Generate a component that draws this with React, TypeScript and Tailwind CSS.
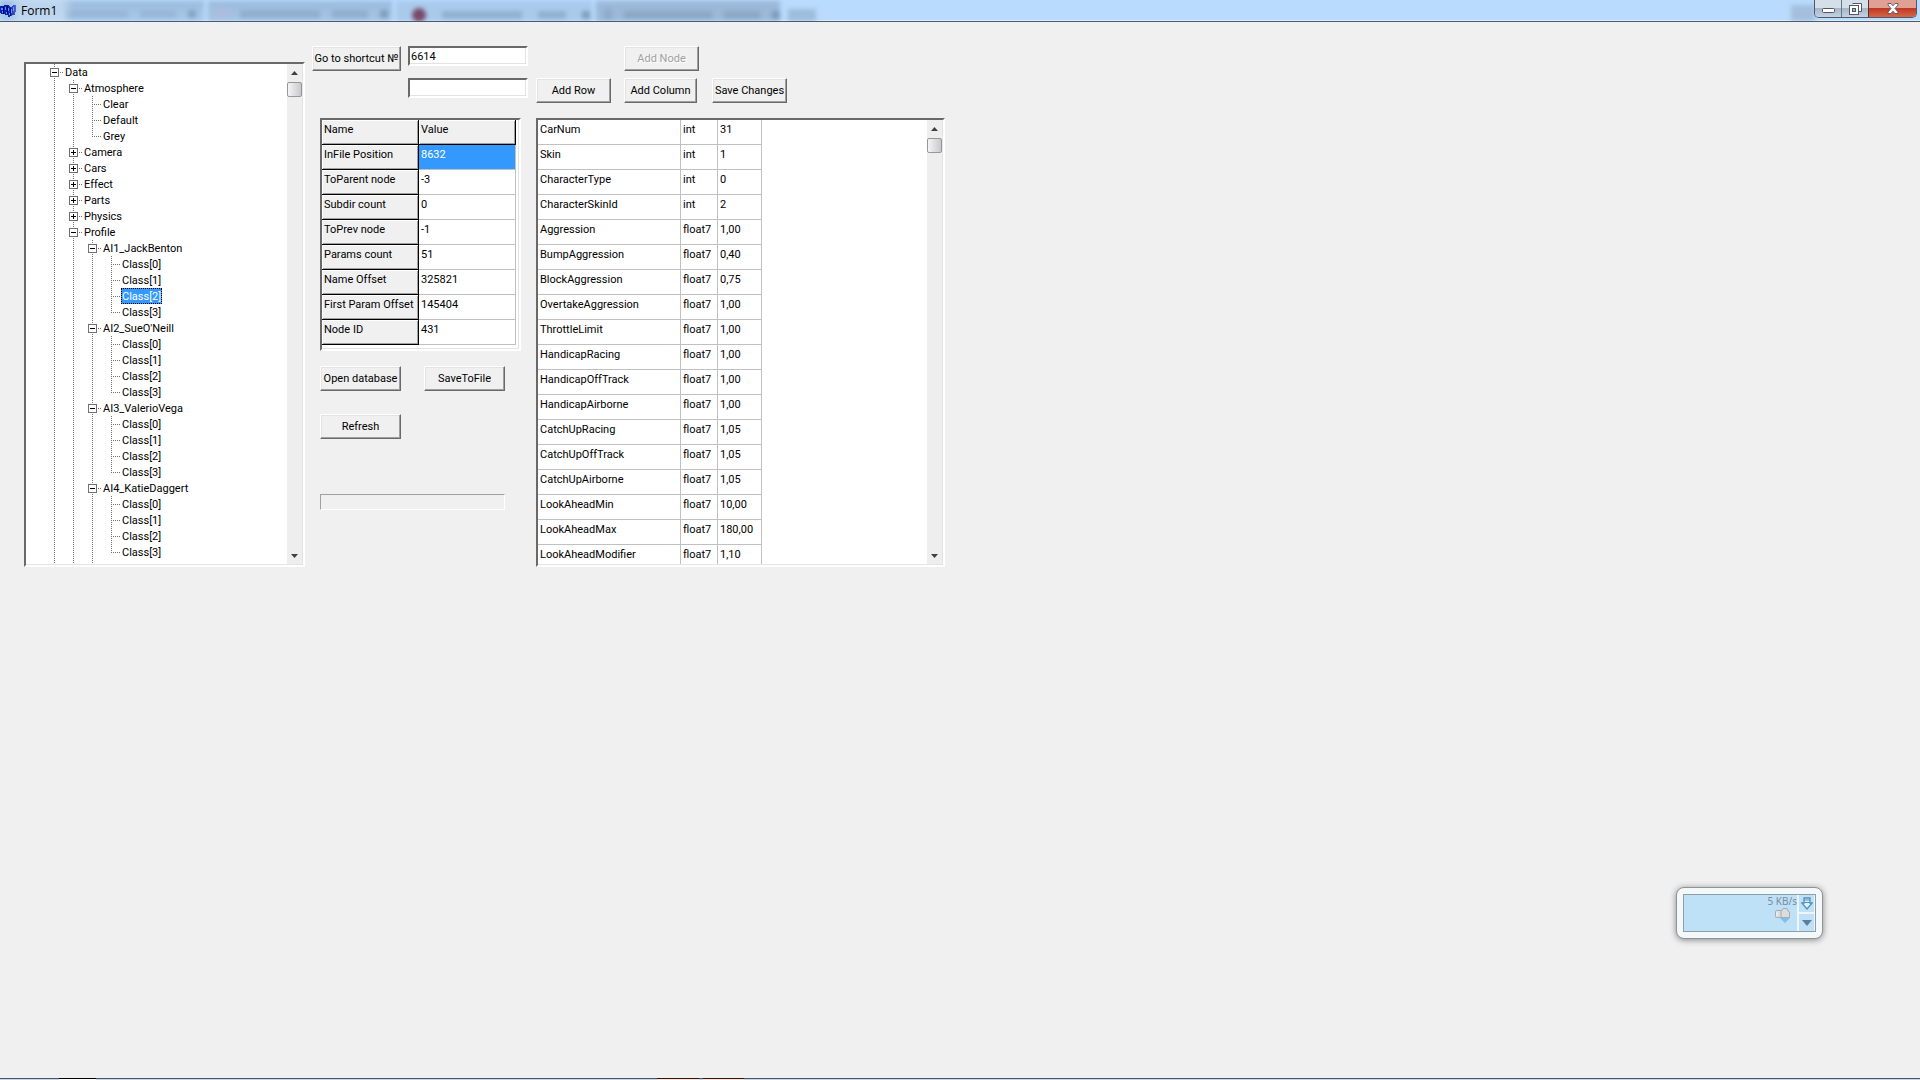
import type { ReactNode } from "react";

type Guide = "line" | "tee" | "end" | "none" | "plus" | "minus";

type Node = { label: string; children?: Node[]; closed?: boolean; selected?: boolean };

const classes = (selected = -1): Node[] =>
  [0, 1, 2, 3].map((n) => ({ label: `Class[${n}]`, selected: n === selected }));

const tree: Node[] = [
  {
    label: "Data",
    children: [
      { label: "Atmosphere", children: [{ label: "Clear" }, { label: "Default" }, { label: "Grey" }] },
      { label: "Camera", closed: true },
      { label: "Cars", closed: true },
      { label: "Effect", closed: true },
      { label: "Parts", closed: true },
      { label: "Physics", closed: true },
      {
        label: "Profile",
        children: [
          { label: "AI1_JackBenton", children: classes(2) },
          { label: "AI2_SueO'Neill", children: classes() },
          { label: "AI3_ValerioVega", children: classes() },
          { label: "AI4_KatieDaggert", children: classes() },
          { label: "AI5_BuddyMcCain", children: [] },
        ],
      },
    ],
  },
];

const nodeInfo: [string, string][] = [
  ["InFile Position", "8632"],
  ["ToParent node", "-3"],
  ["Subdir count", "0"],
  ["ToPrev node", "-1"],
  ["Params count", "51"],
  ["Name Offset", "325821"],
  ["First Param Offset", "145404"],
  ["Node ID", "431"],
];

const params: [string, string, string][] = [
  ["CarNum", "int", "31"],
  ["Skin", "int", "1"],
  ["CharacterType", "int", "0"],
  ["CharacterSkinId", "int", "2"],
  ["Aggression", "float7", "1,00"],
  ["BumpAggression", "float7", "0,40"],
  ["BlockAggression", "float7", "0,75"],
  ["OvertakeAggression", "float7", "1,00"],
  ["ThrottleLimit", "float7", "1,00"],
  ["HandicapRacing", "float7", "1,00"],
  ["HandicapOffTrack", "float7", "1,00"],
  ["HandicapAirborne", "float7", "1,00"],
  ["CatchUpRacing", "float7", "1,05"],
  ["CatchUpOffTrack", "float7", "1,05"],
  ["CatchUpAirborne", "float7", "1,05"],
  ["LookAheadMin", "float7", "10,00"],
  ["LookAheadMax", "float7", "180,00"],
  ["LookAheadModifier", "float7", "1,10"],
];

const sunken =
  "border-2 border-t-[#696969] border-l-[#696969] border-r-white border-b-white shadow-[inset_-1px_-1px_0_#e3e3e3]";

function GuideCell({ kind }: { kind: Guide }) {
  const box = kind === "plus" || kind === "minus";
  return (
    <svg width="19" height="16" viewBox="0 0 19 16" className="shrink-0" shapeRendering="crispEdges" aria-hidden="true">
      <g stroke="#707070" strokeDasharray="1 1" fill="none">
        {kind !== "none" && <path d={kind === "end" ? "M9.5 0V9" : "M9.5 0V16"} />}
        {kind !== "none" && kind !== "line" && <path d="M9 8.5H18" />}
      </g>
      {box && (
        <>
          <rect x="5.5" y="4.5" width="8" height="8" fill="#fff" stroke="#707070" />
          <path d={kind === "plus" ? "M7 8.5H12M9.5 6V11" : "M7 8.5H12"} stroke="#000" />
        </>
      )}
    </svg>
  );
}

function TreeNodes({ nodes, prefix = [] }: { nodes: Node[]; prefix?: Guide[] }) {
  return (
    <ul role="group">
      {nodes.map((node, i) => {
        const last = i === nodes.length - 1 && prefix.length > 1;
        const expandable = node.children || node.closed;
        const kind: Guide = node.closed ? "plus" : node.children ? "minus" : last ? "end" : "tee";
        return (
          <li key={node.label} role="treeitem" aria-expanded={expandable ? !node.closed : undefined}>
            <div className="flex h-4 items-center">
              {prefix.map((g, n) => (
                <GuideCell key={n} kind={g} />
              ))}
              <GuideCell kind={kind} />
              <span
                className={
                  node.selected
                    ? "h-4 bg-[#3399ff] px-px leading-[18px] text-white outline-1 -outline-offset-1 outline-dotted outline-black"
                    : "h-4 px-px leading-[18px]"
                }
              >
                {node.label}
              </span>
            </div>
            {node.children && <TreeNodes nodes={node.children} prefix={[...prefix, "line"]} />}
          </li>
        );
      })}
    </ul>
  );
}

function ScrollBar({ label }: { label: string }) {
  return (
    <div className="mr-px mb-px flex w-[15px] shrink-0 flex-col items-center bg-[#eeeeee]">
      <button type="button" aria-label={`Scroll ${label} up`} className="flex h-4 w-full items-center justify-center pt-0.5">
        <svg width="7" height="4" viewBox="0 0 7 4" aria-hidden="true">
          <path d="M0 4 3.500 0 7 4Z" fill="#404040" />
        </svg>
      </button>
      <div className="mt-0.5 h-[15px] w-[15px] rounded-xs border border-[#979797] bg-linear-to-r from-[#f5f5f5] to-[#c9c9cc]" />
      <button
        type="button"
        aria-label={`Scroll ${label} down`}
        className="mt-auto flex h-4 w-full items-center justify-center"
      >
        <svg width="7" height="4" viewBox="0 0 7 4" aria-hidden="true">
          <path d="M0 0H7L3.500 4Z" fill="#404040" />
        </svg>
      </button>
    </div>
  );
}

function PushButton({ children, className = "", disabled = false }: { children: ReactNode; className?: string; disabled?: boolean }) {
  return (
    <button
      type="button"
      disabled={disabled}
      className={`h-[25px] border border-t-white border-l-white border-r-[#696969] border-b-[#696969] bg-[#f0f0f0] text-center leading-4 whitespace-nowrap shadow-[inset_-1px_-1px_0_#a0a0a0,inset_1px_1px_0_#e3e3e3] disabled:text-[#a0a0a0] disabled:[text-shadow:1px_1px_0_#fff] ${className}`}
    >
      {children}
    </button>
  );
}

const fixedCell =
  "h-[25px] border-r border-b border-black bg-[#f0f0f0] px-0.5 pt-0.5 text-left align-top font-normal leading-4 shadow-[inset_1px_1px_0_#fff,inset_-1px_-1px_0_#a0a0a0]";
const dataCell = "h-[25px] border-r border-b border-[#c0c0c0] px-0.5 pt-0.5 align-top leading-4";

function TitleBar() {
  return (
    <header className="relative flex h-[22px] items-start justify-between overflow-hidden border-b border-[#4a5a72] bg-[#b9dbfd] shadow-[inset_0_-1px_0_#dcecfb]">
      <div className="absolute inset-0 flex items-end gap-1 blur-[2px]" aria-hidden="true">
        <div className="flex h-5 w-[204px] items-center gap-3 bg-linear-to-b from-[#9dbcdd] to-[#a9c9e9] pt-1.5 pl-16">
          <span className="h-2 w-16 bg-[#98b7d8]" />
          <span className="h-2 w-9 bg-[#98b7d8]" />
          <span className="h-2 w-2 bg-[#86a4c4]" />
        </div>
        <div className="flex h-5 w-[184px] items-center gap-3 bg-linear-to-b from-[#9dbcdd] to-[#a5c4e4] pt-1.5 pl-2">
          <span className="h-2 w-3 bg-[#b0bcdc]" />
          <span className="h-2 w-20 bg-[#90aece]" />
          <span className="h-2 w-9 bg-[#90aece]" />
          <span className="h-2 w-2 bg-[#7f9dbc]" />
        </div>
        <div className="flex h-5 w-[196px] items-center gap-4 bg-[#a9caeb] pt-2 pl-4">
          <span className="h-3.5 w-3.5 rounded-full bg-[#7a4a68]" />
          <span className="h-2 w-20 bg-[#92b1d1]" />
          <span className="h-2 w-7 bg-[#92b1d1]" />
          <span className="h-2 w-2 bg-[#809fbe]" />
        </div>
        <div className="flex h-5 w-[184px] items-center gap-3 bg-[#9bb8d8] pt-2 pl-2">
          <span className="h-3 w-2 bg-[#8eabc9]" />
          <span className="h-2 w-22 bg-[#8ba8c6]" />
          <span className="h-2 w-9 bg-[#8ba8c6]" />
          <span className="h-2 w-2 bg-[#7d9bba]" />
        </div>
        <div className="ml-1 h-3 w-7 bg-[#9fbddc]" />
        <div className="mr-[105px] ml-auto h-4 w-6 bg-[#a3bfdc]" />
      </div>
      <div className="relative flex h-5 items-center gap-1 pt-0.5">
        <svg width="17" height="14" viewBox="0 0 17 14" shapeRendering="crispEdges" aria-hidden="true">
          <path d="M0 2h4V1h5v1h1v1h2V2h1V1h3v7h-1v3h-3v1h-2v1H8v-2H5v-1H1V9H0Z" fill="#0b1fb4" />
          <path d="M1 4h2v2H1zM5 3h1v3H5zM8 4h1v3H8zM11 5h1v4h-1zM13 3h1v4h-1zM2 7h1v2H2zM6 8h1v2H6zM9 9h1v2H9z" fill="#4f8fff" />
          <path d="M3 3h1v7H3zM7 2h1v8H7zM10 4h1v8h-1z" fill="#02064e" />
        </svg>
        <h1 className="bg-[#cfe2f5]/60 pr-1 font-['Open_Sans','Noto_Sans',sans-serif] text-xs leading-4 shadow-[0_0_8px_6px_rgba(214,230,246,0.6)]">
          Form1
        </h1>
      </div>
      <div className="relative mr-[3px] flex h-[18px] overflow-hidden rounded-b-[5px] border border-t-0 border-[#4e5a6b]">
        <button type="button" aria-label="Minimize" className="flex w-[27px] items-center justify-center border-r border-[#66758a] bg-[linear-gradient(#d5dfea_45%,#a6b5c8_50%,#c4d3e3)]">
          <svg width="13" height="5" viewBox="0 0 13 5" className="mt-1" aria-hidden="true">
            <rect x="0.5" y="0.5" width="12" height="4" rx="1" fill="#fff" stroke="#535666" />
          </svg>
        </button>
        <button type="button" aria-label="Restore" className="flex w-[27px] items-center justify-center border-r border-[#5b2c2c] bg-[linear-gradient(#d5dfea_45%,#a6b5c8_50%,#c4d3e3)]">
          <svg width="13" height="12" viewBox="0 0 13 12" aria-hidden="true">
            <path d="M3.5.5h9v8h-2.5" fill="#fff" stroke="#535666" />
            <rect x="0.5" y="2.5" width="9" height="9" fill="#fff" stroke="#535666" />
            <rect x="3.5" y="5.5" width="3" height="3" fill="#9fb0c4" stroke="#535666" />
          </svg>
        </button>
        <button type="button" aria-label="Close" className="flex w-[47px] items-center justify-center bg-[linear-gradient(#e0a093_45%,#bf3a22_50%,#d4664a)]">
          <svg width="12" height="11" viewBox="0 0 12 11" aria-hidden="true">
            <path d="M1 .5h3l2 2.300 2-2.300h3v1.500L8 5.500l3 3.500v1.500H8L6 8.200 4 10.500H1V9l3-3.500L1 2Z" fill="#fff" stroke="#535666" strokeWidth="0.9" />
          </svg>
        </button>
      </div>
    </header>
  );
}

function NetMeter() {
  return (
    <aside
      aria-label="Network speed"
      className="absolute right-[97px] bottom-[141px] h-[52px] w-[147px] rounded-lg border border-[#8e9496] bg-[#f3f9fb] p-1.5 shadow-[0_1px_6px_rgba(0,0,0,0.45)]"
    >
      <div className="flex h-[38px] border border-[#8f9da5] bg-[#bee1f7]">
        <div className="flex flex-1 flex-col items-end">
          <span className="font-['Noto_Sans',sans-serif] text-[10px] leading-3 text-[#7b8b9a]">5 KB/s</span>
          <svg width="17" height="17" viewBox="0 0 17 17" className="mr-1.5" aria-hidden="true">
            <path d="M6 11h10l-5 5Z" fill="#7cc0ec" />
            <rect x="1.500" y="3.500" width="8" height="7" rx="1" fill="#d7dfe4" stroke="#a5adb2" />
            <path d="M7 4.500 9 1.500h4l1 2.500 1.500 1v5.500H7Z" fill="#dcdcdc" stroke="#a5adb2" />
            <path d="M3 5.500v3" stroke="#fff" />
          </svg>
        </div>
        <div className="flex w-[18px] flex-col border-r border-l-2 border-[#eef6fa]">
          <button type="button" aria-label="Download view" className="flex flex-1 items-center justify-center border-b-2 border-[#eef6fa]">
            <svg width="12" height="13" viewBox="0 0 12 13" aria-hidden="true">
              <path d="M3 1h6v5h2.200L6 12 .8 6H3Z" fill="#dceffa" stroke="#5190bd" strokeWidth="1.300" />
              <path d="M3 3h6M3 5.500h6" stroke="#5190bd" />
            </svg>
          </button>
          <button type="button" aria-label="Meter menu" className="flex flex-1 items-center justify-center">
            <svg width="10" height="6" viewBox="0 0 10 6" aria-hidden="true">
              <path d="M0 0h10L5 6Z" fill="#5d7f98" />
            </svg>
          </button>
        </div>
      </div>
    </aside>
  );
}

export default function App() {
  return (
    <div className="relative flex min-h-screen flex-col bg-[#f0f0f0] font-['Roboto','Liberation_Sans',sans-serif] text-[11px] text-black">
      <TitleBar />
      <main className="flex flex-1 items-start pt-6 pl-6">
        <section aria-label="Database tree" className={`mt-4 flex h-[505px] w-[281px] shrink-0 overflow-hidden bg-white ${sunken}`}>
          <div role="tree" className="h-[500px] flex-1 overflow-hidden pl-[19px]">
            <TreeNodes nodes={tree} />
          </div>
          <ScrollBar label="tree" />
        </section>

        <div className="ml-[7px] shrink-0">
          <div className="grid grid-cols-[96px_128px_88px_88px_75px] gap-y-[7px]">
            <PushButton className="w-[89px]">Go to shortcut №</PushButton>
            <input aria-label="Shortcut number" defaultValue="6614" className={`h-5 w-[120px] bg-white px-px leading-4 ${sunken}`} />
            <PushButton disabled className="col-start-4 w-[75px]">
              Add Node
            </PushButton>
            <input aria-label="Column or row name" className={`col-start-2 h-5 w-[120px] bg-white px-px leading-4 ${sunken}`} />
            <PushButton className="w-[75px]">Add Row</PushButton>
            <PushButton className="w-[73px]">Add Column</PushButton>
            <PushButton className="w-[75px]">Save Changes</PushButton>
          </div>

          <div className="mt-[15px] flex items-start pl-2">
            <div className="w-[216px]">
              <div className={`h-[233px] w-[201px] bg-white ${sunken}`}>
                <table className="w-[194px] table-fixed border-separate border-spacing-0">
                  <thead>
                    <tr>
                      <th scope="col" className={fixedCell}>Name</th>
                      <th scope="col" className={fixedCell}>Value</th>
                    </tr>
                  </thead>
                  <tbody>
                    {nodeInfo.map(([name, value], i) => (
                      <tr key={name}>
                        <th scope="row" className={fixedCell}>{name}</th>
                        <td className={i === 0 ? `${dataCell} bg-[#3399ff] text-white` : dataCell}>{value}</td>
                      </tr>
                    ))}
                  </tbody>
                </table>
              </div>
              <div className="mt-[15px] flex gap-[23px]">
                <PushButton className="w-[81px]">Open database</PushButton>
                <PushButton className="w-[81px]">SaveToFile</PushButton>
              </div>
              <PushButton className="mt-[23px] w-[81px]">Refresh</PushButton>
              <div
                role="progressbar"
                aria-label="Progress"
                aria-valuenow={0}
                className="mt-[55px] h-4 w-[185px] border border-t-[#a0a0a0] border-l-[#a0a0a0] border-r-white border-b-white"
              />
            </div>

            <section aria-label="Parameters" className={`flex h-[449px] w-[409px] overflow-hidden bg-white ${sunken}`}>
              <div className="h-[444px] flex-1 overflow-hidden">
                <table className="w-[224px] table-fixed border-separate border-spacing-0">
                  <colgroup>
                    <col className="w-[143px]" />
                    <col className="w-[37px]" />
                    <col className="w-[44px]" />
                  </colgroup>
                  <tbody>
                    {params.map(([name, type, value]) => (
                      <tr key={name}>
                        <td className={dataCell}>{name}</td>
                        <td className={dataCell}>{type}</td>
                        <td className={dataCell}>{value}</td>
                      </tr>
                    ))}
                  </tbody>
                </table>
              </div>
              <ScrollBar label="parameters" />
            </section>
          </div>
        </div>
      </main>
      <footer className="flex h-0.5 border-t border-[#4a5566] bg-[#c3d6ea]" aria-hidden="true">
        <span className="-mt-px ml-[59px] h-0.5 w-[37px] border-t border-black bg-white" />
        <span className="-mt-px ml-[561px] h-0.5 w-[42px] border-t border-[#3a1208] bg-[#f4e4dc]" />
        <span className="-mt-px ml-1 h-0.5 w-[41px] border-t border-[#3a1208] bg-[#f4e4dc]" />
      </footer>
      <NetMeter />
    </div>
  );
}
